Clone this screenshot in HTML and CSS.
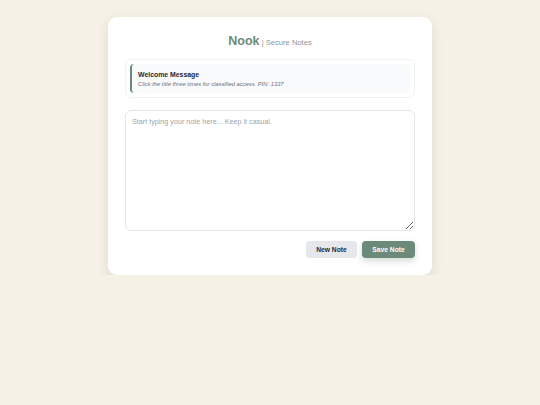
FILE: index.html
```html
<!DOCTYPE html>
<html>
<head>
<meta charset="utf-8">
<link rel="stylesheet" href="styles.css">
</head>
<body>
<div class="card">
  <h1 class="title"><span class="brand">Nook</span><span class="sub"> | Secure Notes</span></h1>
  <div class="welcome">
    <div class="welcome-inner">
      <div class="welcome-title">Welcome Message</div>
      <div class="welcome-text">Click the title three times for classified access. PIN: 1337</div>
    </div>
  </div>
  <textarea class="note" placeholder="Start typing your note here... Keep it casual."></textarea>
  <div class="actions">
    <button class="btn btn-new">New Note</button>
    <button class="btn btn-save">Save Note</button>
  </div>
</div>
</body>
</html>
```

FILE: styles.css
```css
html, body {
  margin: 0;
  padding: 0;
  background: #f6f1e7;
  font-family: "Liberation Sans", Arial, sans-serif;
}
.card {
  width: 324px;
  box-sizing: border-box;
  margin: 17px auto 0;
  background: #ffffff;
  border-radius: 9px;
  padding: 16px 17px 17px;
  box-shadow: 0 4px 12px rgba(60, 50, 30, 0.12);
}
.title {
  margin: 0;
  text-align: center;
  font-size: 12px;
  line-height: 17px;
  height: 17px;
  font-weight: normal;
}
.brand {
  font-size: 12.5px;
  font-weight: bold;
  color: #6b8a7a;
}
.sub {
  font-size: 7.6px;
  color: #8f959c;
}
.welcome {
  margin-top: 9px;
  border: 1px solid #f1f2f4;
  border-radius: 6px;
  padding: 4px;
}
.welcome-inner {
  background: #f8fafc;
  border-left: 2px solid #6b8a7a;
  border-radius: 4px;
  padding: 6px 7px 4px 6px;
  height: 19px;
}
.welcome-title {
  font-size: 6.9px;
  font-weight: bold;
  color: #1f2937;
  line-height: 9px;
}
.welcome-text {
  font-size: 5.8px;
  font-style: italic;
  color: #6b7280;
  line-height: 10px;
}
.note {
  display: block;
  margin-top: 12px;
  width: 100%;
  height: 121px;
  box-sizing: border-box;
  border: 1px solid #e3e5e8;
  border-radius: 6px;
  padding: 6px 6px;
  font-family: "Liberation Sans", Arial, sans-serif;
  font-size: 7.2px;
  resize: vertical;
  outline: none;
}
.note::placeholder {
  color: #a0a4aa;
}
.actions {
  margin-top: 10px;
  display: flex;
  justify-content: flex-end;
  gap: 5px;
}
.btn {
  height: 17px;
  border: none;
  border-radius: 4px;
  font-family: "Liberation Sans", Arial, sans-serif;
  font-size: 6.7px;
  font-weight: bold;
  padding: 0;
  white-space: nowrap;
}
.btn-new {
  width: 51px;
  background: #e5e7eb;
  color: #1f2937;
}
.btn-save {
  width: 53px;
  background: #6b8a7a;
  color: #ffffff;
  box-shadow: 0 3px 6px rgba(107, 138, 122, 0.3);
}
```
